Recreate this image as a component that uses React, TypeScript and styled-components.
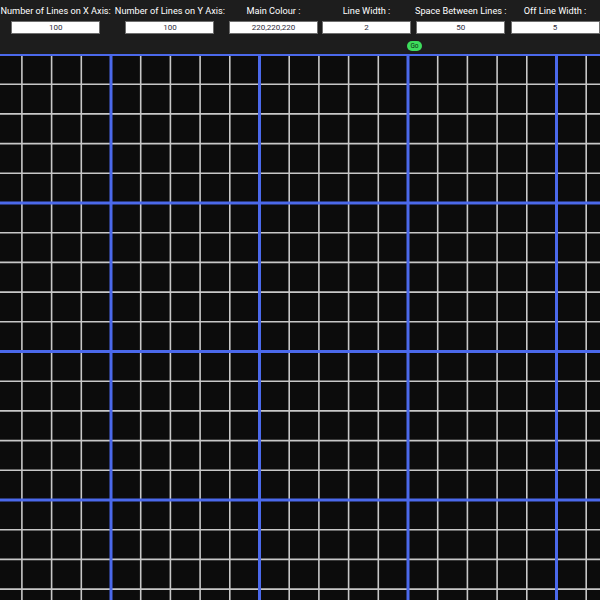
import React from "react";
import styled, { createGlobalStyle } from "styled-components";

const Global = createGlobalStyle`
  html, body { margin: 0; padding: 0; background: #0c0c0c; }
  body { font-family: Roboto, "Liberation Sans", sans-serif; overflow: hidden; }
`;

const Page = styled.div`
  width: 600px;
  height: 600px;
  display: flex;
  flex-direction: column;
  background: #0c0c0c;
`;

const Header = styled.header`
  height: 54px;
  flex: none;
  background: #1d1d1d;
  display: flex;
  flex-direction: column;
  padding-top: 3px;
  box-sizing: border-box;
`;

const Controls = styled.div`
  display: flex;
  justify-content: center;
  gap: 4px;
`;

const Field = styled.div`
  display: flex;
  flex-direction: column;
  align-items: center;
  gap: 3px;
`;

const Label = styled.label`
  color: #ffffff;
  font-size: 9.2px;
  line-height: 15px;
  white-space: nowrap;
`;

const Input = styled.input`
  width: 89px;
  height: 13px;
  box-sizing: border-box;
  border: 1px solid #6e6e6e;
  background: #ffffff;
  color: #2a2a3a;
  font-family: Roboto, "Liberation Sans", sans-serif;
  font-size: 8px;
  text-align: center;
  padding: 0;
  outline: none;
`;

const GoRow = styled.div`
  display: flex;
  padding-left: 407px;
  margin-top: 7px;
`;

const GoButton = styled.button`
  width: 15px;
  height: 10px;
  padding: 0;
  border: none;
  border-radius: 5px;
  background: #3ddc5c;
  color: #0e2e12;
  font-family: Roboto, "Liberation Sans", sans-serif;
  font-size: 6.5px;
  line-height: 10px;
  cursor: pointer;
`;

const GridArea = styled.div`
  flex: 1;
  overflow: hidden;
  background: #0c0c0c;
`;

const fields = [
  { label: "Number of Lines on X Axis:", value: "100" },
  { label: "Number of Lines on Y Axis:", value: "100" },
  { label: "Main Colour :", value: "220,220,220" },
  { label: "Line Width :", value: "2" },
  { label: "Space Between Lines :", value: "50" },
  { label: "Off Line Width :", value: "5" },
];

const STEP = 29.7;
const X0 = 111 - 4 * STEP;
const Y0 = 0.5;

function Grid() {
  const vLines: { x: number; major: boolean }[] = [];
  for (let k = 0; k < 25; k++) {
    const x = X0 + k * STEP;
    if (x > 602) break;
    vLines.push({ x, major: (k - 4) % 5 === 0 });
  }
  const hLines: { y: number; major: boolean }[] = [];
  for (let k = 0; k < 25; k++) {
    const y = Y0 + k * STEP;
    if (y > 548) break;
    hLines.push({ y, major: k % 5 === 0 });
  }
  const gray = "rgb(200,200,200)";
  const blue = "rgb(75,105,235)";
  return (
    <svg width="600" height="546" viewBox="0 0 600 546" style={{ display: "block" }}>
      {vLines.filter(l => !l.major).map((l, i) => (
        <line key={"vg" + i} x1={l.x} x2={l.x} y1={0} y2={546} stroke={gray} strokeWidth={1.6} />
      ))}
      {hLines.filter(l => !l.major).map((l, i) => (
        <line key={"hg" + i} x1={0} x2={600} y1={l.y} y2={l.y} stroke={gray} strokeWidth={1.6} />
      ))}
      {vLines.filter(l => l.major).map((l, i) => (
        <line key={"vb" + i} x1={l.x} x2={l.x} y1={0} y2={546} stroke={blue} strokeWidth={3} />
      ))}
      {hLines.filter(l => l.major).map((l, i) => (
        <line key={"hb" + i} x1={0} x2={600} y1={l.y} y2={l.y} stroke={blue} strokeWidth={3} />
      ))}
    </svg>
  );
}

export default function App() {
  return (
    <Page>
      <Global />
      <Header>
        <Controls>
          {fields.map(f => (
            <Field key={f.label}>
              <Label>{f.label}</Label>
              <Input defaultValue={f.value} />
            </Field>
          ))}
        </Controls>
        <GoRow>
          <GoButton>Go</GoButton>
        </GoRow>
      </Header>
      <GridArea>
        <Grid />
      </GridArea>
    </Page>
  );
}
